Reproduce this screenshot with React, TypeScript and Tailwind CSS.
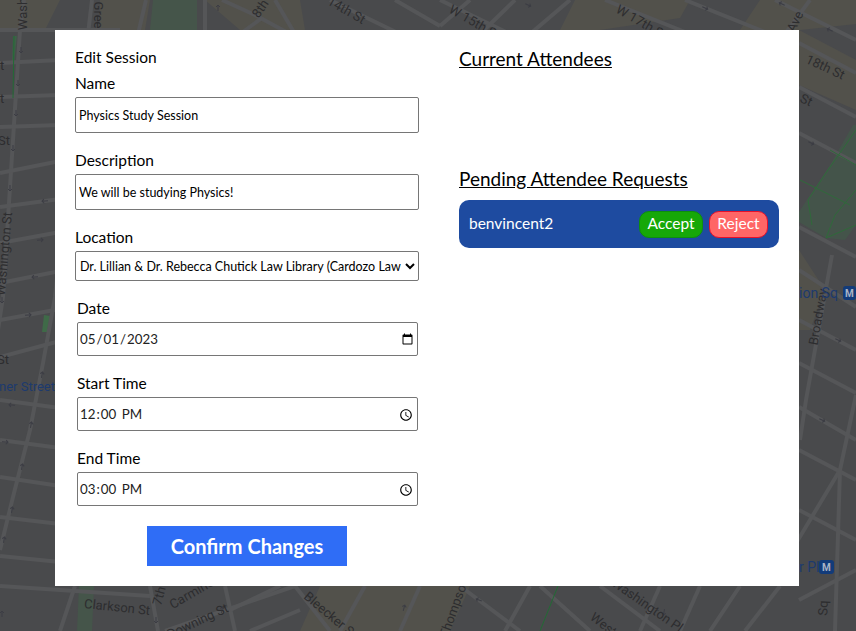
import React from 'react';

const font = { fontFamily: '"Lato", "Liberation Sans", sans-serif' };

// street centre lines of the map behind the dialog
const roads: string[] = [
    // left side
    'M24 0 L20 30 L3 297 L-2 330',
    'M62 230 L55 297 L43 363 L30 430 L13 497 L0 550',
    'M0 63 L60 60', 'M0 97 L60 95', 'M0 127 L60 125',
    'M0 173 L60 161', 'M0 207 L60 199', 'M0 243 L60 232', 'M0 283 L60 271', 'M0 320 L60 309', 'M0 357 L60 341',
    'M0 400 L60 408', 'M0 440 L60 448', 'M0 477 L60 486', 'M0 517 L60 524', 'M0 556 L60 562',
    // top
    'M0 30 L120 30', 'M92 0 L88 34', 'M146 0 L138 34', 'M205 0 L205 34', 'M222 0 L255 15 L290 34',
    'M262 18 L240 34', 'M275 0 L295 34', 'M330 0 L400 34', 'M395 0 L440 26', 'M440 26 L470 0', 'M440 0 L510 34',
    'M515 0 L480 34', 'M570 0 L530 34', 'M605 0 L690 34', 'M685 0 L770 34', 'M775 0 L856 40', 'M810 0 L785 34',
    // right side
    'M799 43 L856 73', 'M799 87 L856 117', 'M799 133 L856 163', 'M799 227 L856 257', 'M799 270 L856 307',
    'M799 320 L856 350', 'M799 363 L856 393', 'M799 407 L856 440', 'M799 450 L856 480', 'M799 510 L856 540',
    'M832 255 L806 400 L800 440', 'M856 395 L840 470 L795 545', 'M799 600 L856 570', 'M840 470 L835 631',
    // bottom
    'M0 586 L150 596', 'M75 586 L60 631', 'M150 586 L158 631', 'M225 586 L235 631', 'M165 631 L295 586', 'M295 586 L330 631',
    'M230 610 L280 586', 'M365 586 L340 631', 'M420 586 L400 631', 'M460 586 L520 631', 'M530 586 L505 631', 'M540 586 L590 631',
    'M600 586 L660 631', 'M660 586 L640 631', 'M700 586 L680 631', 'M740 586 L710 631', 'M780 586 L745 631', 'M300 610 L250 631',
];

const tan = [
    '0,0 60,0 45,30 0,30', '100,0 150,0 145,30 100,30', '205,0 300,0 305,30 240,30', '575,0 690,0 680,18 600,30 560,30',
    '760,0 856,0 856,24 800,30 740,30', '799,30 856,60 856,110 799,85', '320,586 470,586 450,631 300,631', '799,250 825,290 810,330 799,330',
];

const arrows: [number, number, number][] = [
    [21, 50, 90], [18, 83, 90], [16, 113, 90], [13, 148, 90], [10, 188, 90], [45, 201, 175], [40, 240, -5], [35, 277, 175],
    [2, 300, 90], [28, 315, -5], [42, 375, -80], [12, 405, 185], [31, 425, -80], [5, 442, 5], [22, 467, -80], [12, 510, -80], [4, 540, -80],
    [811, 143, 25], [838, 340, 25], [822, 420, 25], [218, 8, -90], [528, 5, 25], [705, 8, 25], [782, 4, 205], [830, 30, 205],
    [2, 614, -90], [156, 620, 90], [222, 610, -80], [404, 608, -75], [479, 600, 200], [664, 612, 100],
];

const labels: { text: string; x: number; y: number; r: number }[] = [
    { text: 'Wash', x: 24, y: 14, r: -90 },
    { text: 'Gree', x: 97, y: 15, r: 90 },
    { text: '8th', x: 261, y: 9, r: -55 },
    { text: '14th St', x: 346, y: 11, r: 30 },
    { text: 'W 15th St', x: 474, y: 23, r: 30 },
    { text: 'W 17th St', x: 641, y: 23, r: 30 },
    { text: 'Ave', x: 796, y: 22, r: -65 },
    { text: '18th St', x: 825, y: 68, r: 25 },
    { text: 'St', x: 806, y: 101, r: 25 },
    { text: 'Broadway', x: 819, y: 317, r: -80 },
    { text: 'St', x: 4, y: 142, r: 0 },
    { text: 't', x: 2, y: 67, r: 0 },
    { text: 't', x: 2, y: 100, r: 0 },
    { text: 'Washington St', x: 5, y: 254, r: -85 },
    { text: 'St', x: 3, y: 361, r: 0 },
    { text: 'Clarkson St', x: 117, y: 608, r: 6 },
    { text: '7th', x: 160, y: 596, r: -75 },
    { text: 'Carmine', x: 192, y: 594, r: -30 },
    { text: 'Downing St', x: 198, y: 622, r: -25 },
    { text: 'Bleecker St', x: 330, y: 616, r: 40 },
    { text: 'Thompson', x: 455, y: 608, r: -70 },
    { text: 'Washington Pl', x: 647, y: 606, r: 35 },
    { text: 'West', x: 603, y: 625, r: 38 },
    { text: 'Sq', x: 824, y: 608, r: -88 },
];

function MapBackdrop() {
    return (
        <svg className="absolute inset-0" width="856" height="631" viewBox="0 0 856 631">
            <rect width="856" height="631" fill="#494a4c" />
            {tan.map((p) => <polygon key={p} points={p} fill="#52514b" />)}
            <polygon points="153,0 197,0 197,30 150,30" fill="#45554a" />
            <polygon points="853,125 856,125 856,225 845,240 826,238 799,222 799,212 830,165" fill="#44544a" />
            <polygon points="79,586 94,586 92,631 77,631" fill="#45554a" />
            <polygon points="44,315 50,316 47,332 42,332" fill="#3f6a48" />
            <polygon points="13,36 17,36 14,63 12,63" fill="#3f5f48" />
            {roads.map((d) => <path key={d} d={d} stroke="#555658" strokeWidth="4" fill="none" />)}
            {arrows.map(([x, y, r]) => (
                <path
                    key={`${x}-${y}`}
                    d="M-3 0 L3 0 M1 -2 L3 0 L1 2"
                    transform={`translate(${x} ${y}) rotate(${r})`}
                    stroke="#3c3d44"
                    strokeWidth="1"
                    fill="none"
                />
            ))}
            <path d="M856 130 L828 170 L808 200 M826 238 L835 215 L856 190 M808 200 L812 225 M826 238 L856 225 M800 180 L850 205 M830 150 L856 165" stroke="#2f6a3a" strokeWidth="1" fill="none" />
            <path d="M14 36 L13 98" stroke="#226b35" strokeWidth="1" fill="none" />
            <path d="M558 586 L540 631" stroke="#226b35" strokeWidth="1" fill="none" />
            {labels.map((l) => (
                <text
                    key={l.text + l.x}
                    x={l.x}
                    y={l.y}
                    transform={`rotate(${l.r} ${l.x} ${l.y})`}
                    textAnchor="middle"
                    dominantBaseline="middle"
                    fontFamily="Roboto, sans-serif"
                    fontSize="13"
                    fill="#2d2d2f"
                >
                    {l.text}
                </text>
            ))}
            <text x="-1" y="391" fontFamily="Roboto, sans-serif" fontSize="13" fill="#1d3a6e">ner Street</text>
            <text x="799" y="298" fontFamily="Roboto, sans-serif" fontSize="14" fill="#1d3a6e">ion Sq</text>
            <rect x="843" y="286" width="13" height="14" rx="3" fill="#123b7a" />
            <text x="849.5" y="297" textAnchor="middle" fontFamily="Roboto, sans-serif" fontSize="10" fontWeight="700" fill="#a9b4c6">M</text>
            <text x="799" y="572" fontFamily="Roboto, sans-serif" fontSize="14" fill="#1d3a6e">r Pl</text>
            <rect x="819" y="560" width="15" height="14" rx="3" fill="#123b7a" />
            <text x="826.5" y="571" textAnchor="middle" fontFamily="Roboto, sans-serif" fontSize="10" fontWeight="700" fill="#a9b4c6">M</text>
        </svg>
    );
}

export default function App() {
    return (
        <div className="relative w-[856px] h-[631px] overflow-hidden" style={font}>
            <MapBackdrop />

            <div className="absolute left-[55px] top-[30px] w-[744px] h-[556px] bg-white flex text-black">
                {/* form column */}
                <div className="w-[344px] ml-[20px] pt-[15px] flex flex-col">
                    <div className="text-[15.5px] leading-6">Edit Session</div>
                    <label className="text-[15.5px] leading-6 mt-[2px]">Name</label>
                    <input
                        defaultValue="Physics Study Session"
                        className="h-[36px] w-full mt-[2px] px-[3px] border border-[#767676] rounded-[2px] text-[12.5px] outline-none"
                    />

                    <label className="text-[15.5px] leading-6 mt-[15px]">Description</label>
                    <input
                        defaultValue="We will be studying Physics!"
                        className="h-[36px] w-full mt-[2px] px-[3px] border border-[#767676] rounded-[2px] text-[12.5px] outline-none"
                    />

                    <label className="text-[15.5px] leading-6 mt-[15px]">Location</label>
                    <select className="h-[30px] w-full mt-[2px] bg-white border border-[#767676] rounded-[2px] text-[12.5px] outline-none appearance-auto">
                        <option>Dr. Lillian &amp; Dr. Rebecca Chutick Law Library (Cardozo Law School)</option>
                    </select>

                    <div className="w-[341px] ml-[2px] flex flex-col">
                        <label className="text-[15.5px] leading-6 mt-[15px]">Date</label>
                        <input
                            type="date"
                            defaultValue="2023-05-01"
                            className="h-[34px] w-full mt-[2px] pl-[1px] pr-[1px] pt-[2px] border border-[#767676] rounded-[2px] text-[13.33px] text-[#222222] outline-none"
                        />

                        <label className="text-[15.5px] leading-6 mt-[15px]">Start Time</label>
                        <input
                            type="time"
                            defaultValue="12:00"
                            className="h-[34px] w-full mt-[2px] pl-[1px] pr-[1px] pt-[2px] border border-[#767676] rounded-[2px] text-[13.33px] text-[#222222] outline-none"
                        />

                        <label className="text-[15.5px] leading-6 mt-[15px]">End Time</label>
                        <input
                            type="time"
                            defaultValue="15:00"
                            className="h-[34px] w-full mt-[2px] pl-[1px] pr-[1px] pt-[2px] border border-[#767676] rounded-[2px] text-[13.33px] text-[#222222] outline-none"
                        />
                    </div>

                    <button className="w-[200px] h-[40px] mt-[20px] self-center bg-[#2f6df6] text-white text-[20px] font-bold">
                        Confirm Changes
                    </button>
                </div>

                {/* attendees column */}
                <div className="w-[320px] ml-[40px] pt-[15px] flex flex-col">
                    <h2 className="text-[19px] leading-[28px] underline">Current Attendees</h2>
                    <h2 className="text-[19px] leading-[28px] underline mt-[92px]">Pending Attendee Requests</h2>
                    <div className="h-[48px] mt-[7px] bg-[#1e4ba0] rounded-[10px] pl-[10px] pr-[11px] flex items-center text-white">
                        <span className="text-[15.5px]">benvincent2</span>
                        <button className="ml-auto h-[27px] w-[64px] bg-[#16a808] border border-[#0d8f0d] rounded-[10px] text-[15.5px] leading-none">Accept</button>
                        <button className="ml-[6px] h-[27px] w-[59px] bg-[#ff6666] border border-[#e8102a] rounded-[10px] text-[15.5px] leading-none">Reject</button>
                    </div>
                </div>
            </div>
        </div>
    );
}
